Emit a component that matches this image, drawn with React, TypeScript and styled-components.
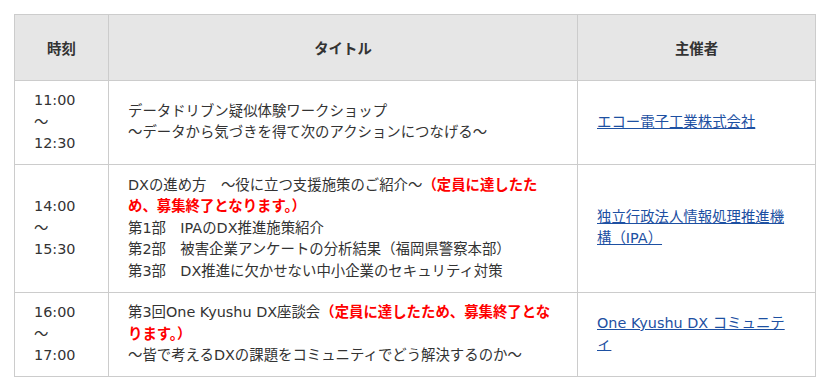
import React from "react";
import styled, { createGlobalStyle } from "styled-components";

const Global = createGlobalStyle`
  html, body { margin: 0; padding: 0; background: #fff; }
  body { font-family: "DejaVu Sans", "Noto Sans CJK JP", sans-serif; color: #333; }
`;

const Page = styled.div`
  padding: 14px 0 0 14px;
`;

const Table = styled.table`
  border-collapse: collapse;
  table-layout: fixed;
  width: 801px;
  font-size: 14.4px;
  line-height: 1.5;
`;

const Th = styled.th`
  background: #e6e6e6;
  border: 1px solid #cccccc;
  font-family: "Noto Sans CJK JP", sans-serif;
  font-weight: bold;
  color: #333;
  text-align: center;
  vertical-align: middle;
  padding: 22px 20px 21px;
`;

const Td = styled.td`
  border: 1px solid #cccccc;
  vertical-align: middle;
  text-align: left;
  padding: 9.5px 20px 9.5px 19px;
  color: #333;
  line-height: 21.5px;
`;

const Closed = styled.span`
  color: #ff0000;
  font-weight: bold;
`;

const Link = styled.a`
  color: #1d50a2;
  text-decoration: underline;
`;

type Row = {
  start: string;
  end: string;
  title: React.ReactNode;
  org: string;
};

const rows: Row[] = [
  {
    start: "11:00",
    end: "12:30",
    title: (
      <>
        データドリブン疑似体験ワークショップ
        <br />
        ～データから気づきを得て次のアクションにつなげる～
      </>
    ),
    org: "エコー電子工業株式会社",
  },
  {
    start: "14:00",
    end: "15:30",
    title: (
      <>
        DXの進め方　～役に立つ支援施策のご紹介～<Closed>（定員に達したため、募集終了となります。）</Closed>
        <br />
        第1部　IPAのDX推進施策紹介
        <br />
        第2部　被害企業アンケートの分析結果（福岡県警察本部）
        <br />
        第3部　DX推進に欠かせない中小企業のセキュリティ対策
      </>
    ),
    org: "独立行政法人情報処理推進機構（IPA）",
  },
  {
    start: "16:00",
    end: "17:00",
    title: (
      <>
        第3回One Kyushu DX座談会<Closed>（定員に達したため、募集終了となります。）</Closed>
        <br />
        ～皆で考えるDXの課題をコミュニティでどう解決するのか～
      </>
    ),
    org: "One Kyushu DX コミュニティ",
  },
];

export default function App() {
  return (
    <Page>
      <Global />
      <Table>
        <colgroup>
          <col style={{ width: 94 }} />
          <col style={{ width: 469 }} />
          <col style={{ width: 238 }} />
        </colgroup>
        <thead>
          <tr>
            <Th>時刻</Th>
            <Th>タイトル</Th>
            <Th>主催者</Th>
          </tr>
        </thead>
        <tbody>
          {rows.map((r, i) => (
            <tr key={i}>
              <Td>
                {r.start}
                <br />～<br />
                {r.end}
              </Td>
              <Td>{r.title}</Td>
              <Td>
                <Link href="#">{r.org}</Link>
              </Td>
            </tr>
          ))}
        </tbody>
      </Table>
    </Page>
  );
}
